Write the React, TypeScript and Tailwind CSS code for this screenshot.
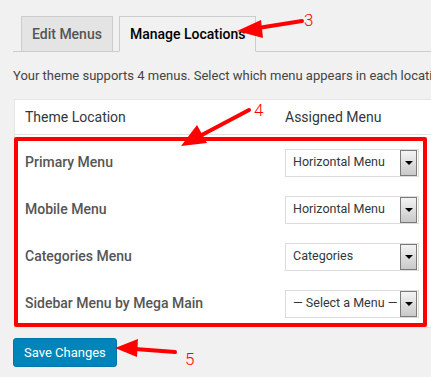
const rows = [
  { name: "Primary Menu", value: "Horizontal Menu" },
  { name: "Mobile Menu", value: "Horizontal Menu" },
  { name: "Categories Menu", value: "Categories" },
  { name: "Sidebar Menu by Mega Main", value: "— Select a Menu —" },
];

function FakeSelect({ value }: { value: string }) {
  return (
    <div className="flex h-[28px] w-[134px] items-center border border-[#dcdcdc] bg-white pl-[7px] pr-[1px]">
      <span className="flex-1 whitespace-nowrap text-[12.5px] text-[#32373c]">{value}</span>
      <span className="flex h-[26px] w-[17px] items-center justify-center border border-[#7a7a7a] bg-gradient-to-b from-[#f4f4f4] to-[#c9c9c9]">
        <span className="h-0 w-0 border-x-[4px] border-t-[4px] border-x-transparent border-t-black" />
      </span>
    </div>
  );
}

export default function App() {
  return (
    <div className="relative h-[377px] w-[431px] overflow-hidden bg-[#f1f1f1] font-['Roboto',sans-serif] text-[#444]">
      {/* tabs */}
      <div className="ml-[13px] flex items-end gap-[6px] border-b border-[#ccc] pl-[8px] pt-[16px]">
        <div className="-mb-px flex h-[36px] items-center border border-[#ccc] bg-[#e4e4e4] px-[10px] text-[14px] font-medium text-[#555]">
          Edit Menus
        </div>
        <div className="-mb-px flex h-[36px] items-center border border-[#ccc] border-b-[#f1f1f1] bg-[#f1f1f1] px-[10px] text-[14px] font-medium text-black">
          Manage Locations
        </div>
      </div>

      <p className="ml-[13px] mt-[14px] whitespace-nowrap text-[13px] leading-[20px] text-[#444]">
        Your theme supports 4 menus. Select which menu appears in each location.
      </p>

      {/* locations table */}
      <div className="relative ml-[14px] mt-[13px] w-[430px] border border-[#e5e5e5] bg-white">
        <div className="flex h-[35px] items-center border-b border-[#e1e1e1] pl-[10px] text-[14px] text-[#32373c]">
          <span className="w-[260px]">Theme Location</span>
          <span>Assigned Menu</span>
        </div>
        <div className="pt-[4px]">
          {rows.map((r) => (
            <div key={r.name} className="flex h-[47px] items-center pl-[10px]">
              <span className="w-[260px] text-[14px] font-medium text-[#555]">{r.name}</span>
              <FakeSelect value={r.value} />
            </div>
          ))}
        </div>
        {/* red highlight box */}
        <div className="absolute left-[-1px] top-[37px] h-[190px] w-[413px] rounded-[2px] border-[4px] border-[#ff0000]" />
      </div>

      <button className="ml-[13px] mt-[10px] h-[29px] rounded-[3px] border border-[#0073aa] bg-[#0085ba] px-[10px] text-[13px] text-white">
        Save Changes
      </button>

      {/* annotations */}
      <svg className="pointer-events-none absolute left-0 top-0" width="431" height="377">
        <g stroke="#f00" strokeWidth="4" strokeLinecap="round" fill="#f00">
          <line x1="302" y1="21" x2="258" y2="28" />
          <line x1="249" y1="110" x2="198" y2="137" />
          <line x1="175" y1="352" x2="135" y2="349" />
        </g>
        <g fill="#f00">
          <polygon points="237,31 261,20 263,38" />
          <polygon points="181,146 207,143 197,125" />
          <polygon points="115,348 138,339 137,357" />
        </g>
      </svg>
      <span className="absolute left-[304px] top-[10px] text-[17px] font-light leading-[20px] text-[#f00]">3</span>
      <span className="absolute left-[254px] top-[100px] text-[17px] font-light leading-[20px] text-[#f00]">4</span>
      <span className="absolute left-[185px] top-[349px] text-[17px] font-light leading-[20px] text-[#f00]">5</span>
    </div>
  );
}
